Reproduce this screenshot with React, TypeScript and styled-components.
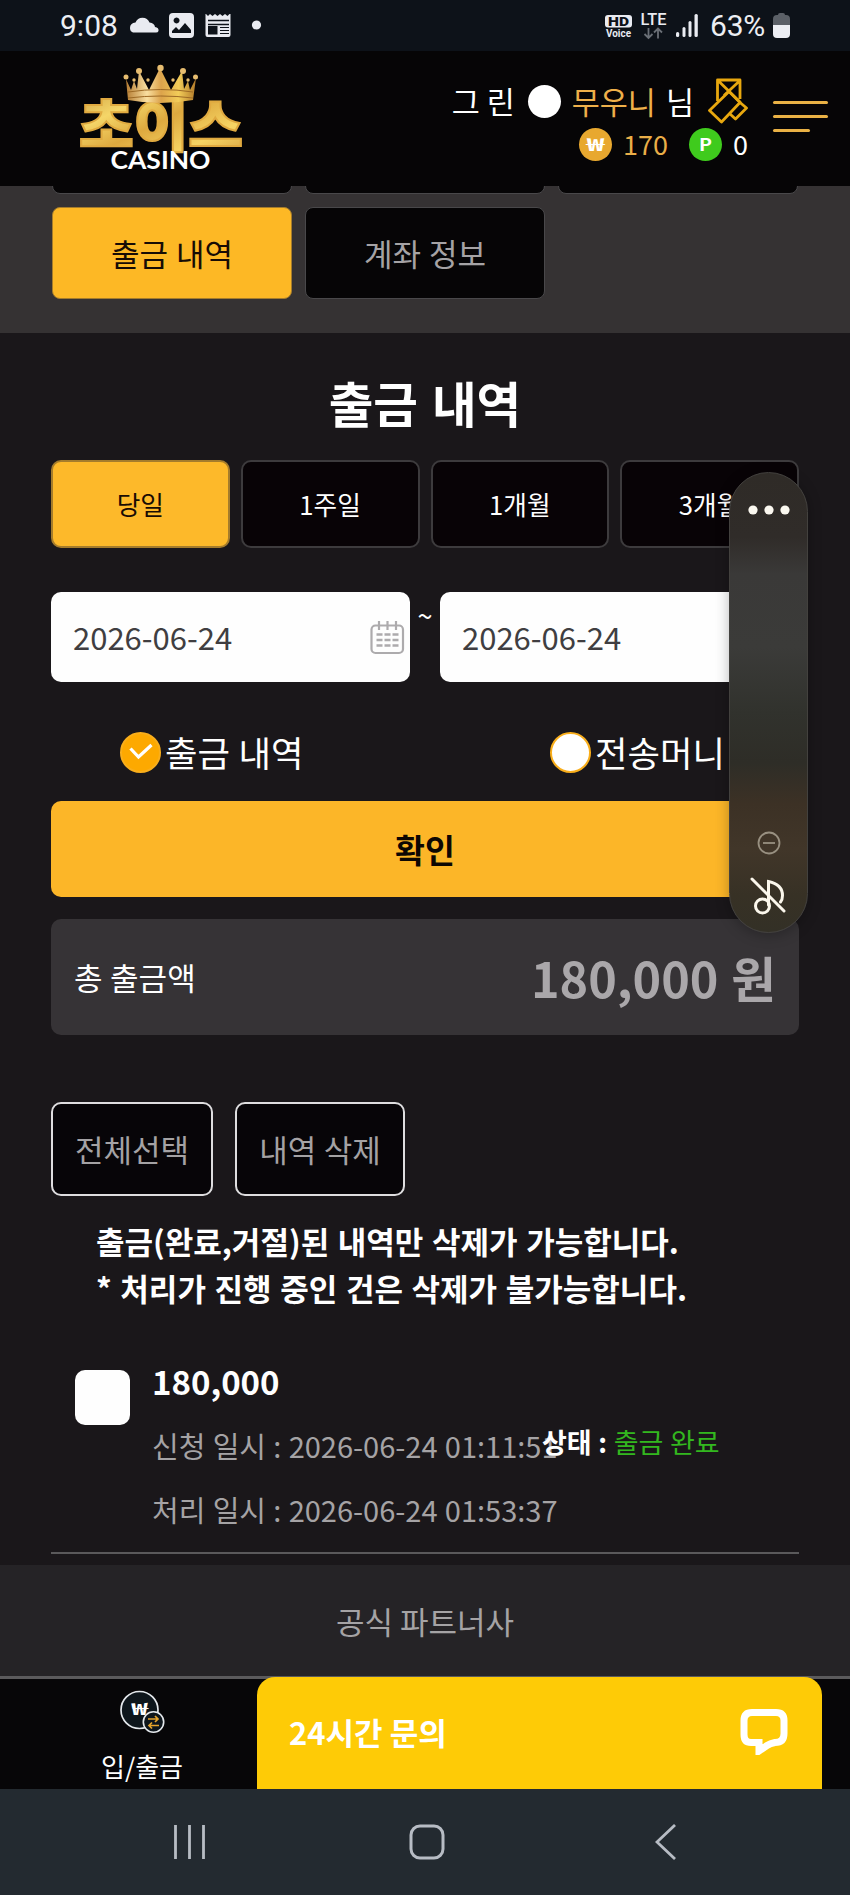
import React from "react";
import styled, { createGlobalStyle } from "styled-components";

const amber = "#fcb628";
const kr = `"Noto Sans CJK KR", "Noto Sans", sans-serif`;

const GlobalStyle = createGlobalStyle`
  * { box-sizing: border-box; }
  body { margin: 0; background: #1a171a; color: #fff; font-family: ${kr}; }
`;

const Screen = styled.div`
  position: relative;
  width: 850px;
  height: 1895px;
  overflow: hidden;
  display: flex;
  flex-direction: column;
  background: #1a171a;
`;

const StatusBar = styled.div`
  flex: none;
  height: 51px;
  padding: 0 60px 0 60px;
  display: flex;
  align-items: center;
  justify-content: space-between;
  background: #0d1219;
  color: #eceef3;
  font: 400 30px/51px Roboto, sans-serif;
`;
const StatusGroup = styled.div`
  display: flex;
  align-items: center;
  height: 51px;
`;
const Clock = styled.span`
  width: 70px;
`;
const Battery = styled.span`
  width: 63px;
  letter-spacing: -0.2px;
`;

const Header = styled.header`
  flex: none;
  height: 135px;
  padding: 0 22px 0 76px;
  display: flex;
  justify-content: space-between;
  background: #060506;
`;
const Account = styled.div`
  display: flex;
  gap: 25px;
`;
const Profile = styled.div`
  padding-top: 27px;
  display: flex;
  flex-direction: column;
  align-items: flex-end;
`;
const NameRow = styled.div`
  display: flex;
  align-items: center;
  height: 46px;
  font-size: 30.5px;
  line-height: 46px;
  white-space: pre;
`;
const Grade = styled.span`
  width: 33px;
  height: 33px;
  margin: 0 11px 0 13px;
  border-radius: 50%;
  background: #fff;
`;
const Nick = styled.span`
  color: #eeb04a;
`;
const Honor = styled.span`
  margin: 0 14px 0 10px;
`;
const WalletRow = styled.div`
  display: flex;
  align-items: center;
  height: 40px;
  font-size: 27px;
  line-height: 40px;
`;
const Coin = styled.span<{ $bg: string }>`
  width: 33px;
  height: 33px;
  border-radius: 50%;
  background: ${(p) => p.$bg};
  display: flex;
  align-items: center;
  justify-content: center;
`;
const Balance = styled.span<{ $gold?: boolean }>`
  margin-left: 11px;
  margin-right: ${(p) => (p.$gold ? "21px" : "0")};
  color: ${(p) => (p.$gold ? "#e9ae48" : "#fff")};
`;
const MenuButton = styled.div`
  width: 55px;
  padding-top: 50px;
  display: flex;
  flex-direction: column;
  gap: 11px;
`;
const MenuLine = styled.span<{ $short?: boolean }>`
  width: ${(p) => (p.$short ? 37 : 55)}px;
  height: 3px;
  border-radius: 2px;
  background: #e9b145;
`;

const TabArea = styled.nav`
  flex: none;
  height: 147px;
  padding: 0 52px;
  overflow: hidden;
  background: #353233;
`;
const TabGrid = styled.div`
  display: grid;
  grid-template-columns: repeat(3, 240px);
  grid-auto-rows: 92px;
  gap: 13px;
  margin-top: -84px;
`;
const Tab = styled.div<{ $active?: boolean }>`
  border: 1px solid ${(p) => (p.$active ? "#a57c2c" : "#49484a")};
  border-radius: 8px;
  background: ${(p) => (p.$active ? "#fdb825" : "#060506")};
  color: ${(p) => (p.$active ? "#170c05" : "#a5a3a5")};
  font-size: 31px;
  line-height: 89px;
  text-align: center;
  word-spacing: 1px;
`;

const Main = styled.main`
  flex: none;
  height: 1232px;
  padding: 0 51px;
  display: flex;
  flex-direction: column;
  word-spacing: 0.04em;
`;
const Title = styled.h1`
  margin: 33px 0 0;
  height: 73px;
  font-size: 48.5px;
  font-weight: 700;
  line-height: 72px;
  text-align: center;
  word-spacing: 3px;
`;
const Periods = styled.div`
  margin-top: 21px;
  display: grid;
  grid-template-columns: repeat(4, 1fr);
  gap: 11px;
`;
const Period = styled.div<{ $active?: boolean }>`
  height: 88px;
  border: 2px solid ${(p) => (p.$active ? "#a57c2b" : "#3d3b3d")};
  border-radius: 10px;
  background: ${(p) => (p.$active ? "#fdb92a" : "#080306")};
  color: ${(p) => (p.$active ? "#180c04" : "#fff")};
  font-size: 25.7px;
  line-height: 84px;
  text-align: center;
`;
const DateRow = styled.div`
  margin-top: 44px;
  display: flex;
  height: 90px;
`;
const DateField = styled.div`
  flex: 1;
  padding: 0 5px 0 22px;
  display: flex;
  align-items: center;
  justify-content: space-between;
  border-radius: 10px;
  background: #fefefe;
  color: #403e41;
  font-size: 31px;
  line-height: 90px;
`;
const Tilde = styled.span`
  width: 30px;
  font-size: 27px;
  line-height: 46px;
  text-align: center;
`;
const RadioRow = styled.div`
  margin-top: 49px;
  padding-left: 69px;
  display: grid;
  grid-template-columns: 430px 1fr;
  height: 42px;
`;
const RadioOption = styled.div`
  display: flex;
  align-items: center;
  gap: 4px;
  font-size: 35.3px;
  line-height: 42px;
`;
const RadioMark = styled.span<{ $on?: boolean }>`
  width: 41px;
  height: 41px;
  border: 2px solid #f9ae1b;
  border-radius: 50%;
  background: ${(p) => (p.$on ? "#fda900" : "#fff")};
  display: flex;
  align-items: center;
  justify-content: center;
`;
const Confirm = styled.div`
  margin-top: 28px;
  height: 96px;
  border-radius: 10px;
  background: ${amber};
  color: #0d0703;
  font-size: 32.5px;
  font-weight: 700;
  line-height: 95px;
  text-align: center;
`;
const Total = styled.div`
  margin-top: 22px;
  height: 116px;
  padding: 0 23px;
  display: flex;
  justify-content: space-between;
  border-radius: 10px;
  background: #363336;
  font-size: 31px;
  line-height: 116px;
`;
const TotalAmount = styled.strong`
  color: #aaa7aa;
  font-size: 48.5px;
  word-spacing: 2px;
`;
const Actions = styled.div`
  margin-top: 67px;
  display: flex;
  gap: 22px;
`;
const Action = styled.div<{ $w: number }>`
  width: ${(p) => p.$w}px;
  height: 94px;
  border: 2px solid #dedddf;
  border-radius: 10px;
  background: #070508;
  color: #a4a2a4;
  font-size: 31px;
  line-height: 90px;
  text-align: center;
`;
const Notice = styled.p`
  margin: 22px 0 0 45px;
  font-size: 31px;
  font-weight: 700;
  line-height: 46.5px;
  white-space: pre;
  word-spacing: 1.6px;
`;
const Record = styled.div`
  margin-top: 46px;
  height: 197px;
  padding-left: 24px;
  display: flex;
  border-bottom: 2px solid #5a595b;
`;
const CheckBox = styled.span`
  width: 55px;
  height: 55px;
  margin-top: 13px;
  border-radius: 10px;
  background: #fefefe;
`;
const RecordInfo = styled.div`
  margin-left: 22px;
  width: 390px;
  white-space: nowrap;
`;
const RecordAmount = styled.div`
  height: 50px;
  font-size: 33px;
  font-weight: 700;
  line-height: 48px;
`;
const RecordLine = styled.div`
  height: 63.5px;
  padding-top: 8px;
  color: #a5a3a5;
  font-size: 29px;
  line-height: 61px;
  word-spacing: 0.8px;
`;
const State = styled.div`
  margin-top: 63px;
  height: 44px;
  font-size: 27px;
  line-height: 44px;
  color: #33b71f;
  white-space: pre;
  word-spacing: 0.5px;
`;
const StateLabel = styled.strong`
  color: #fff;
`;

const Partners = styled.footer`
  flex: none;
  height: 114px;
  border-bottom: 3px solid #5b5a5c;
  background: #252326;
  color: #a5a3a5;
  font-size: 31px;
  line-height: 112px;
  text-align: center;
`;
const Dock = styled.div`
  flex: none;
  height: 110px;
  padding-right: 28px;
  display: flex;
  align-items: flex-end;
  background: #070608;
`;
const DockItem = styled.div`
  width: 257px;
  height: 110px;
  padding: 10px 0 0 27px;
  display: flex;
  flex-direction: column;
  align-items: center;
  gap: 13px;
  font-size: 26px;
  line-height: 40px;
`;
const ChatBar = styled.div`
  flex: 1;
  height: 112px;
  padding: 0 34px 2px 32px;
  display: flex;
  align-items: center;
  justify-content: space-between;
  border-radius: 18px 18px 0 0;
  background: #fecb06;
  font-size: 31px;
  font-weight: 700;
  line-height: 110px;
`;
const NavBar = styled.div`
  flex: none;
  height: 106px;
  padding: 0 173px 0 173px;
  display: grid;
  grid-template-columns: 236px 1fr auto;
  align-items: center;
  background: #232a30;
`;

const SidePanel = styled.div`
  position: absolute;
  left: 729px;
  top: 472px;
  width: 79px;
  height: 461px;
  padding: 32px 0 17px;
  display: flex;
  flex-direction: column;
  align-items: center;
  justify-content: space-between;
  border: 1px solid #43413e;
  border-radius: 40px;
  background: linear-gradient(180deg, #2f2b27 0%, #302c29 14%, #3a3938 22%, #3b3b39 38%, #31322d 52%, #2e2d27 63%, #3c3125 72%, #413629 82%, #373125 92%, #333026 100%);
  box-shadow: 0 2px 14px rgba(0, 0, 0, 0.28);
`;
const PanelActions = styled.div`
  display: flex;
  flex-direction: column;
  align-items: center;
  gap: 22px;
`;

const Logo = () => (
  <svg width="172" height="135" viewBox="76 51 172 135">
    <defs>
      <linearGradient id="gold" x1="0" y1="0" x2="1" y2="1">
        <stop offset="0" stopColor="#c2913a" />
        <stop offset="0.3" stopColor="#f5d668" />
        <stop offset="0.5" stopColor="#dda93f" />
        <stop offset="0.75" stopColor="#f7d564" />
        <stop offset="1" stopColor="#cf9a3c" />
      </linearGradient>
      <linearGradient id="crown" x1="0" y1="0" x2="1" y2="0">
        <stop offset="0" stopColor="#b67d33" />
        <stop offset="0.3" stopColor="#f9dfa0" />
        <stop offset="0.5" stopColor="#dca34b" />
        <stop offset="0.75" stopColor="#f2cc58" />
        <stop offset="1" stopColor="#b27a29" />
      </linearGradient>
    </defs>
    <text x="79" y="145.500" fontFamily={kr} fontSize="56" fontWeight="900" fill="url(#gold)" stroke="#e0aa40" strokeWidth="2" textLength="164" lengthAdjust="spacingAndGlyphs">초이스</text>
    <path d="M126 79l5 11 3-9 3 8 2-18 10 19 11-22 11 22 11-19 2 18 4-8 2 9 6-12-3 22q-33 6-65 0z" fill="url(#crown)" />
    <path d="M128 92q33-5 65 0M128 98q33-4 65 0" stroke="#9d6a25" strokeWidth="1" fill="none" />
    <g fill="#e7bd70">
      <circle cx="126" cy="77" r="2.500" /><circle cx="139" cy="71" r="3" /><circle cx="160.500" cy="68" r="3.200" />
      <circle cx="183" cy="71" r="3" /><circle cx="195.500" cy="77" r="2.500" /><circle cx="134" cy="80" r="1.700" />
      <circle cx="148" cy="80" r="1.700" /><circle cx="173" cy="80" r="1.700" /><circle cx="188" cy="80" r="1.700" />
    </g>
    <text x="110.500" y="168.700" fontFamily="Lato, sans-serif" fontSize="25" fontWeight="700" fill="#fff" textLength="100" lengthAdjust="spacingAndGlyphs">CASINO</text>
  </svg>
);

const StatusIcons = () => (
  <svg width="134" height="51" viewBox="130 0 134 51" fill="#e9ebf1">
    <path d="M133 32.500q-3-1-3-4.500 0-5 5.500-5.500a7.500 7.500 0 0 1 14 0q5 .5 5.500 4.500 4 .5 3.500 4-.5 1.500-2.500 1.500z" />
    <path fillRule="evenodd" d="M173 13h17q4 0 4 4v17q0 4-4 4h-17q-4 0-4-4V17q0-4 4-4zM172 33h19v-3l-6-7-6 7-3-3-4 4zM176.500 17.500a3 3 0 1 0 .1 0z" />
    <path d="M206 14l2 2 2-2 2.500 2 2.500-2 2.500 2 2.500-2 2.500 2 2.500-2 2.500 2 2-2h1v21q0 2-2 2h-21q-2 0-2-2V14z" />
    <path d="M208 20.500h21M208 24.500h21" stroke="#0d1219" strokeWidth="1.300" fill="none" />
    <path d="M220 27.500h9M220 30.500h9M220 33.500h9" stroke="#0d1219" strokeWidth="1.100" fill="none" />
    <path d="M208 26h9.500v8.500H208z" fill="#0d1219" />
    <circle cx="256.500" cy="25" r="4.600" />
  </svg>
);

const SignalIcons = () => (
  <svg width="105" height="51" viewBox="607 0 105 51" fill="#e9ebf1">
    <rect x="607" y="15" width="27" height="12.500" rx="3" />
    <text x="610" y="25.500" fontFamily="Roboto, sans-serif" fontSize="12" fontWeight="900" fill="#0d1219" textLength="21" lengthAdjust="spacingAndGlyphs">HD</text>
    <text x="608" y="37" fontFamily="Roboto, sans-serif" fontSize="10" fontWeight="700" textLength="25" lengthAdjust="spacingAndGlyphs">Voice</text>
    <text x="642.500" y="25" fontFamily="Roboto, sans-serif" fontSize="16" fontWeight="500" textLength="26" lengthAdjust="spacingAndGlyphs">LTE</text>
    <path d="M650.500 28v10m-4-4l4 4 4-4M660 38.500v-10m-4 4l4-4 4 4" stroke="#6a6f76" strokeWidth="1.800" fill="none" />
    <rect x="678" y="32" width="3.200" height="5" rx="1.500" />
    <rect x="684.500" y="27" width="3" height="10" rx="1.500" />
    <rect x="690.500" y="21" width="3" height="16" rx="1.500" />
    <rect x="696.500" y="14" width="3.300" height="23" rx="1.500" />
  </svg>
);

const BatteryIcon = () => (
  <svg width="17" height="26" viewBox="0 0 17 26">
    <path d="M5 2q0-2 2-2h3q2 0 2 2h1q4 0 4 4v7H0V6q0-4 4-4z" fill="#5b6067" />
    <path d="M0 12h17v9q0 4-4 4H4q-4 0-4-4z" fill="#eceef3" />
  </svg>
);

const RankIcon = () => (
  <svg width="40" height="46" viewBox="708 78 40 46" fill="none" stroke="#e8a80f" strokeWidth="2.800" strokeLinejoin="round">
    <path d="M717.500 101V80h22.500v19M718 80.500l22.500 22M740 80.500l-16 15" />
    <path d="M729 91.500L709.500 110.500l12 11.500 18.500-19.500z" />
    <path d="M740 102.500l6.500 5.500-11 11-6-5.500" />
  </svg>
);

const CoinMark = ({ label, width }: { label: string; width: number }) => (
  <svg width="25" height="25" viewBox="0 0 25 25">
    <text x={(25 - width) / 2} y="19" fontFamily={kr} fontSize="17.500" fontWeight="700" fill="#fff" textLength={width} lengthAdjust="spacingAndGlyphs">{label}</text>
  </svg>
);

const CalendarIcon = () => (
  <svg width="35" height="35" viewBox="0 0 35 35" fill="none" stroke="#adabad" strokeWidth="2.200">
    <rect x="1.500" y="5.500" width="31.500" height="27.500" rx="4" />
    <path d="M9 1v9M17.500 1v9M26 1v9" />
    <path strokeWidth="2.600" d="M6.500 14.500h6m2 0h6m2 0h6M6.500 20h6m2 0h6m2 0h6M6.500 25.500h6m2 0h6m2 0h6" />
  </svg>
);

const ExchangeIcon = () => (
  <svg width="46" height="44" viewBox="0 0 46 44">
    <circle cx="20.500" cy="21" r="18.500" fill="#0e161c" stroke="#e4e8ec" strokeWidth="1.700" />
    <text x="12" y="26" fontFamily={kr} fontSize="16.500" fontWeight="700" fill="#fff" textLength="17" lengthAdjust="spacingAndGlyphs">₩</text>
    <circle cx="34.500" cy="33" r="10.200" fill="#0e161c" stroke="#e4e8ec" strokeWidth="1.600" />
    <path d="M29 30h10m-3-3l3 3-3 3M40 36.500H30m3-3l-3 3 3 3" stroke="#e6a42c" strokeWidth="1.700" fill="none" />
  </svg>
);

const ChatIcon = () => (
  <svg width="48" height="46" viewBox="0 0 48 46">
    <path d="M12 3.500h24q8 0 8 8v13q0 9-9 9-5 1-8 3l-8 5.500V33.500h-8q-7 0-7-8v-14q0-8 8-8z" fill="none" stroke="#fff" strokeWidth="7" />
  </svg>
);

const MuteIcon = () => (
  <svg width="37" height="38" viewBox="0 0 37 38" fill="none" stroke="#fbf7ec" strokeWidth="3" strokeLinecap="round">
    <circle cx="12.500" cy="29" r="7" />
    <path d="M18.500 28V4.500q14 3 14 14 0 4-2 6.500M2 2l32 32" />
  </svg>
);

export default function App() {
  return (
    <>
      <GlobalStyle />
      <Screen>
        <StatusBar>
          <StatusGroup>
            <Clock>9:08</Clock>
            <StatusIcons />
          </StatusGroup>
          <StatusGroup>
            <SignalIcons />
            <Battery>63%</Battery>
            <BatteryIcon />
          </StatusGroup>
        </StatusBar>

        <Header>
          <Logo />
          <Account>
            <Profile>
              <NameRow>
                그 린<Grade />
                <Nick>무우니</Nick>
                <Honor>님</Honor>
                <RankIcon />
              </NameRow>
              <WalletRow>
                <Coin $bg="#e8a82f">
                  <CoinMark label="₩" width={18} />
                </Coin>
                <Balance $gold>170</Balance>
                <Coin $bg="#3fcb1d">
                  <CoinMark label="P" width={13} />
                </Coin>
                <Balance>0</Balance>
              </WalletRow>
            </Profile>
            <MenuButton>
              <MenuLine />
              <MenuLine />
              <MenuLine $short />
            </MenuButton>
          </Account>
        </Header>

        <TabArea>
          <TabGrid>
            <Tab />
            <Tab />
            <Tab />
            <Tab $active>출금 내역</Tab>
            <Tab>계좌 정보</Tab>
          </TabGrid>
        </TabArea>

        <Main>
          <Title>출금 내역</Title>
          <Periods>
            <Period $active>당일</Period>
            <Period>1주일</Period>
            <Period>1개월</Period>
            <Period>3개월</Period>
          </Periods>
          <DateRow>
            <DateField>
              2026-06-24
              <CalendarIcon />
            </DateField>
            <Tilde>~</Tilde>
            <DateField>2026-06-24</DateField>
          </DateRow>
          <RadioRow>
            <RadioOption>
              <RadioMark $on>
                <svg width="24" height="18" viewBox="0 0 24 18" fill="none" stroke="#fff" strokeWidth="3.200">
                  <path d="M1.500 5.500l8 8.500L22.500 2" />
                </svg>
              </RadioMark>
              출금 내역
            </RadioOption>
            <RadioOption>
              <RadioMark />
              전송머니
            </RadioOption>
          </RadioRow>
          <Confirm>확인</Confirm>
          <Total>
            총 출금액
            <TotalAmount>180,000 원</TotalAmount>
          </Total>
          <Actions>
            <Action $w={162}>전체선택</Action>
            <Action $w={170}>내역 삭제</Action>
          </Actions>
          <Notice>{"출금(완료,거절)된 내역만 삭제가 가능합니다.\n* 처리가 진행 중인 건은 삭제가 불가능합니다."}</Notice>
          <Record>
            <CheckBox />
            <RecordInfo>
              <RecordAmount>180,000</RecordAmount>
              <RecordLine>신청 일시 : 2026-06-24 01:11:51</RecordLine>
              <RecordLine>처리 일시 : 2026-06-24 01:53:37</RecordLine>
            </RecordInfo>
            <State>
              <StateLabel>상태 : </StateLabel>출금 완료
            </State>
          </Record>
        </Main>

        <Partners>공식 파트너사</Partners>
        <Dock>
          <DockItem>
            <ExchangeIcon />
            입/출금
          </DockItem>
          <ChatBar>
            24시간 문의
            <ChatIcon />
          </ChatBar>
        </Dock>
        <NavBar>
          <svg width="34" height="36" viewBox="0 0 34 36" stroke="#b7bcc4" strokeWidth="2.800">
            <path d="M2.500 1v34M16.500 1v34M30.500 1v34" />
          </svg>
          <svg width="36" height="36" viewBox="0 0 36 36" fill="none" stroke="#b7bcc4" strokeWidth="3">
            <rect x="2" y="2" width="32" height="32" rx="9" />
          </svg>
          <svg width="22" height="36" viewBox="0 0 22 36" fill="none" stroke="#b7bcc4" strokeWidth="2.800">
            <path d="M20 1L2 18l18 17" />
          </svg>
        </NavBar>

        <SidePanel>
          <svg width="42" height="10" viewBox="0 0 42 10" fill="#fbf8f0">
            <circle cx="5" cy="5" r="4.600" />
            <circle cx="21" cy="5" r="4.600" />
            <circle cx="37" cy="5" r="4.600" />
          </svg>
          <PanelActions>
            <svg width="24" height="24" viewBox="0 0 24 24" fill="none" stroke="#989081" strokeWidth="1.800">
              <circle cx="12" cy="12" r="10.500" />
              <path d="M6 12h12" />
            </svg>
            <MuteIcon />
          </PanelActions>
        </SidePanel>
      </Screen>
    </>
  );
}
